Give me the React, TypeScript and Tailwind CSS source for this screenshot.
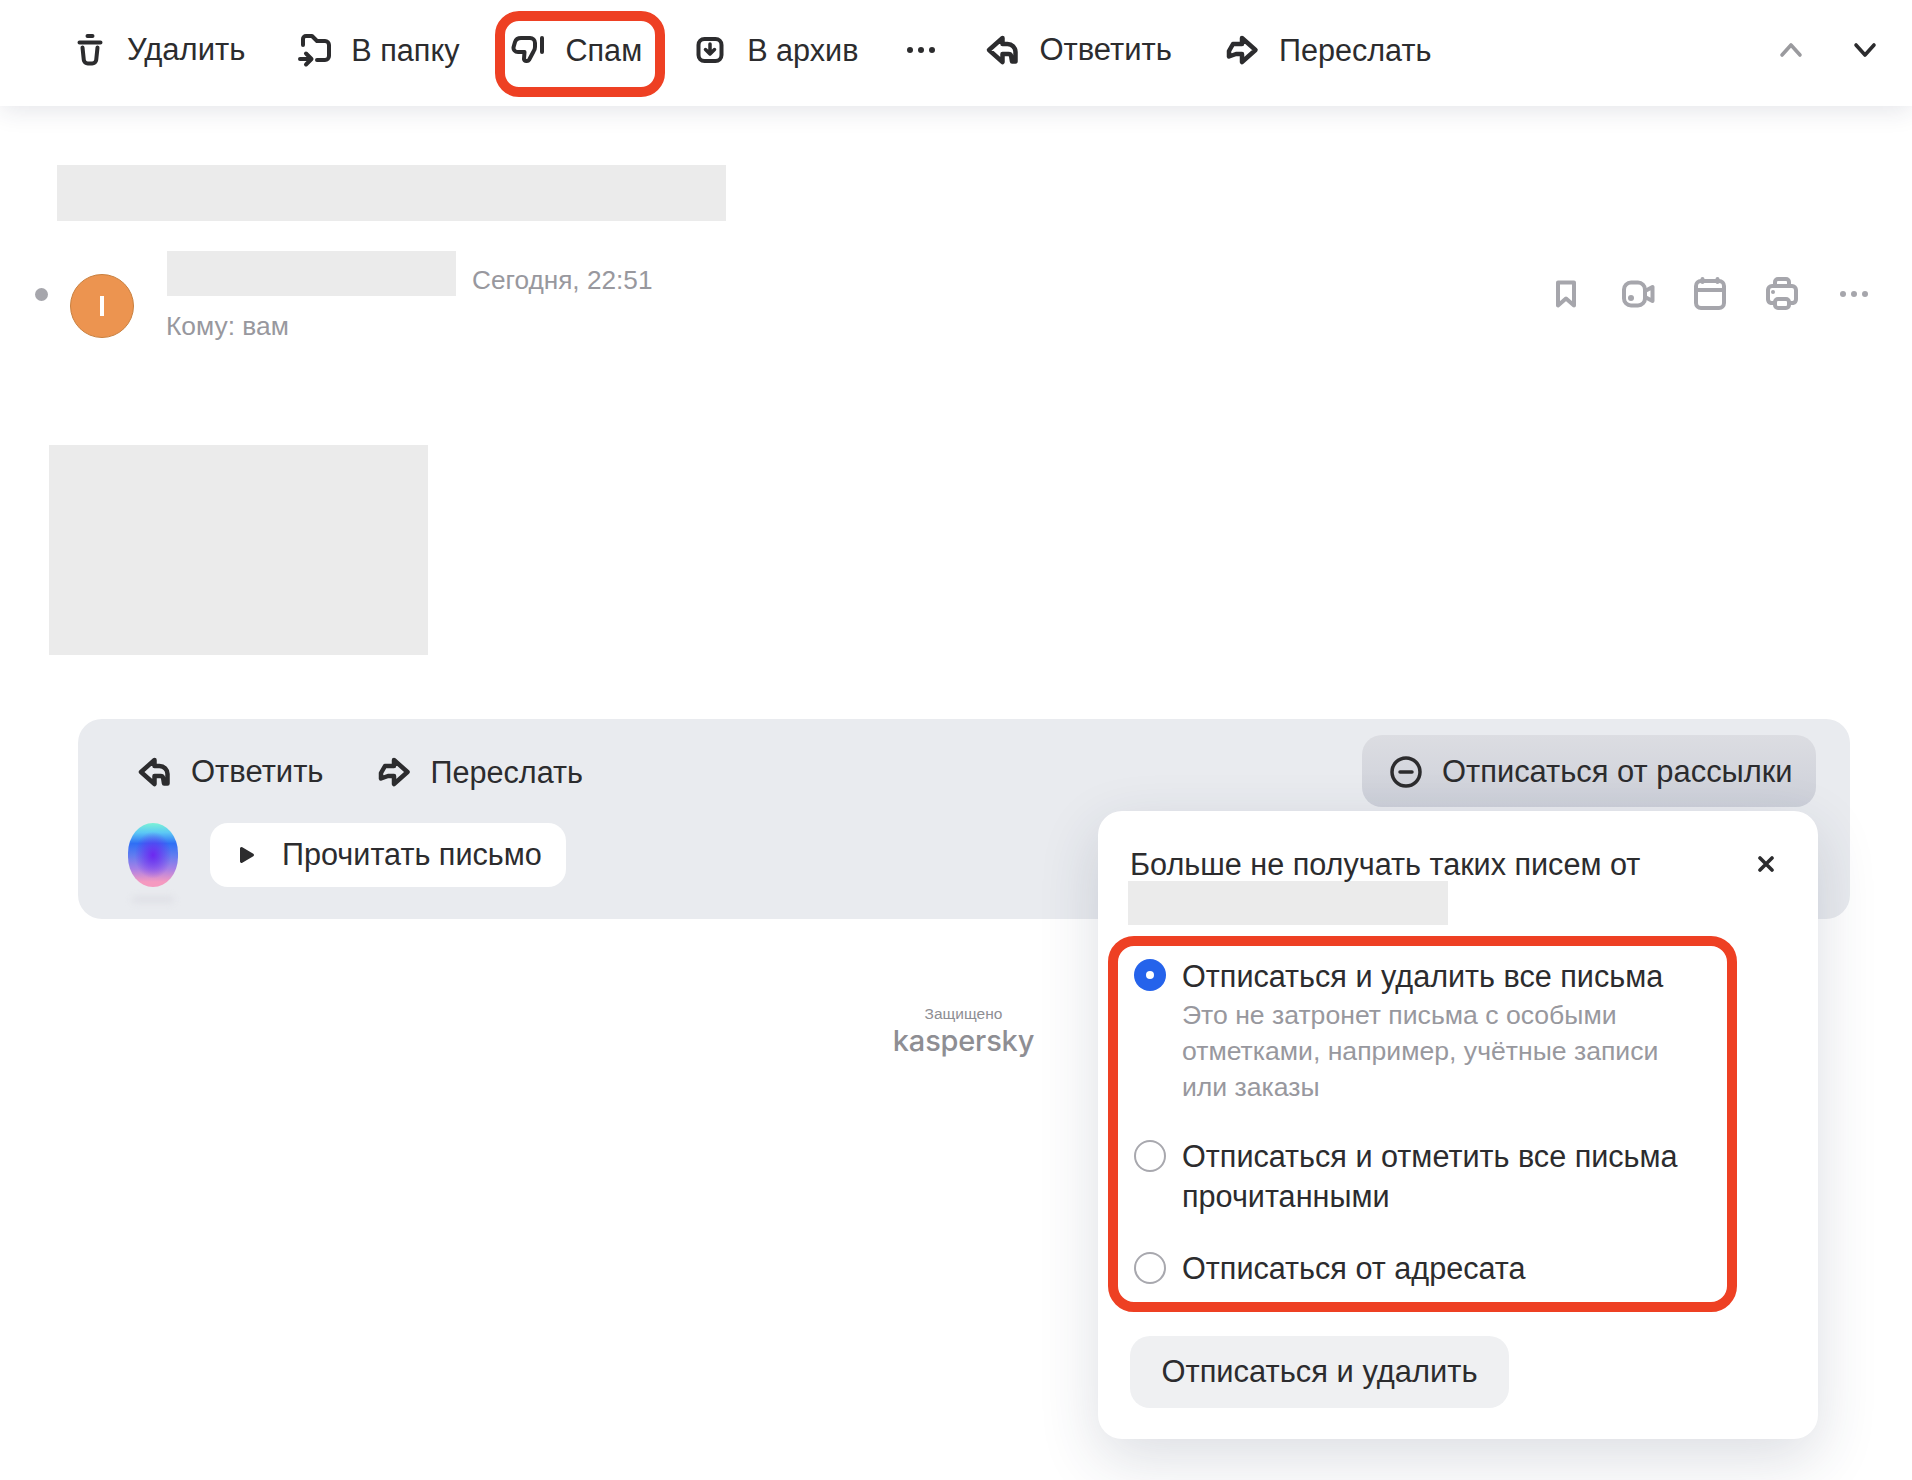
const ink = "#2c2c2e";

function TrashIcon() {
  return (
    <svg width="34" height="36" viewBox="0 0 34 36" fill="none" stroke={ink} strokeWidth="4" strokeLinecap="round" strokeLinejoin="round">
      <path d="M14.500 4h5M6.500 10.500h21M9.500 15.500l1.300 12.500a4 4 0 0 0 4 3.500h4.400a4 4 0 0 0 4-3.500l1.300-12.500" />
    </svg>
  );
}

function FolderIcon() {
  return (
    <svg width="34" height="36" viewBox="0 0 34 36" fill="none" stroke={ink} strokeWidth="4" strokeLinecap="round" strokeLinejoin="round">
      <path d="M6 13V7a3 3 0 0 1 3-3h6l5 5h8a4 4 0 0 1 4 4v11a4 4 0 0 1-4 4h-8" />
      <path d="M3 27h11M9 21.500l5.500 5.500L9 32.500" />
    </svg>
  );
}

function SpamIcon() {
  return (
    <svg width="34" height="36" viewBox="0 0 34 36" fill="none" stroke={ink} strokeWidth="4" strokeLinecap="round" strokeLinejoin="round">
      <path d="M10 6h9a5 5 0 0 1 5 5v4c0 1.500-.5 3-1.500 4.500L18 28c-.8 1.300-4.500 1.500-5-1l.5-7H7c-3 0-5-2.500-4.400-5l1.400-5c.8-2.500 3.500-4 6-4z" />
      <path d="M31 6v14" />
    </svg>
  );
}

function ArchiveIcon() {
  return (
    <svg width="34" height="36" viewBox="0 0 34 36" fill="none" stroke={ink} strokeWidth="4" strokeLinecap="round" strokeLinejoin="round">
      <rect x="5.500" y="7" width="23" height="22" rx="6" />
      <path d="M17 12v9M12.500 17.500 17 22l4.500-4.500" strokeWidth="3.500" />
    </svg>
  );
}

function ReplyIcon() {
  return (
    <svg width="34" height="36" viewBox="0 0 34 36" fill="none" stroke={ink} strokeWidth="4.500" strokeLinecap="round" strokeLinejoin="round">
      <path d="M17.500 6 4 18l13.500 12v-8h6c1.500 0 2.500 1 2.700 2.500l.8 5h3.500V20c0-4.500-3.500-8-8-8h-5z" />
    </svg>
  );
}

function ForwardIcon() {
  return (
    <svg width="34" height="36" viewBox="0 0 34 36" fill="none" stroke={ink} strokeWidth="4.500" strokeLinecap="round" strokeLinejoin="round">
      <path d="M17 6l13.500 12L17 30v-8h-6l-7 2.500V19l4-7h9z" />
    </svg>
  );
}

function Dots({ color = ink }: { color?: string }) {
  return (
    <svg width="30" height="8" viewBox="0 0 30 8" fill={color}>
      <circle cx="4" cy="4" r="3" />
      <circle cx="15" cy="4" r="3" />
      <circle cx="26" cy="4" r="3" />
    </svg>
  );
}

function Chevron({ up, color }: { up?: boolean; color: string }) {
  return (
    <svg width="24" height="16" viewBox="0 0 24 16" fill="none" stroke={color} strokeWidth="3.600" strokeLinecap="round" strokeLinejoin="round">
      <path d={up ? "M3 13 12 3l9 10" : "M3 3l9 10 9-10"} />
    </svg>
  );
}

function ToolItem({ icon, label, size = "text-[30.6px]" }: { icon: React.ReactNode; label: string; size?: string }) {
  return (
    <div className="flex items-center gap-5">
      <span className="flex w-[34px] justify-center">{icon}</span>
      <span className={`${size} leading-[36px]`}>{label}</span>
    </div>
  );
}

function MetaIcons() {
  const c = "#a6a6ac";
  return (
    <div className="flex items-center gap-[36px]">
      <svg width="36" height="36" viewBox="0 0 36 36" fill="none" stroke={c} strokeWidth="4" strokeLinejoin="round" strokeLinecap="round">
        <path d="M10 6.500h16v23l-8-7-8 7z" />
      </svg>
      <svg width="36" height="36" viewBox="0 0 36 36" fill="none" stroke={c} strokeWidth="4" strokeLinejoin="round" strokeLinecap="round">
        <rect x="4" y="6.500" width="21" height="23" rx="7" />
        <path d="M25 15l7.500-4v14l-7.500-4" />
        <circle cx="11" cy="22" r="3" fill={c} stroke="none" />
      </svg>
      <svg width="36" height="36" viewBox="0 0 36 36" fill="none" stroke={c} strokeWidth="4" strokeLinejoin="round" strokeLinecap="round">
        <rect x="4" y="5" width="28" height="27" rx="5" />
        <path d="M4 14h28M10.500 3v3M25.500 3v3" />
      </svg>
      <svg width="36" height="36" viewBox="0 0 36 36" fill="none" stroke={c} strokeWidth="4" strokeLinejoin="round" strokeLinecap="round">
        <path d="M11 10V6a3 3 0 0 1 3-3h8a3 3 0 0 1 3 3v4" />
        <path d="M10 27H7a4 4 0 0 1-3-4V14a4 4 0 0 1 4-4h20a4 4 0 0 1 4 4v9a4 4 0 0 1-3 4h-3" />
        <rect x="11" y="23" width="14" height="9" rx="3" />
        <circle cx="9" cy="16" r="2" fill={c} stroke="none" />
      </svg>
      <span className="flex w-[36px] justify-center"><Dots color={c} /></span>
    </div>
  );
}

function Radio({ on }: { on?: boolean }) {
  if (on) {
    return (
      <span className="mt-[3px] flex h-8 w-8 shrink-0 items-center justify-center rounded-full bg-[#2563eb]">
        <span className="h-2 w-2 rounded-full bg-white" />
      </span>
    );
  }
  return <span className="mt-[3px] h-8 w-8 shrink-0 rounded-full border-2 border-[#a8a8ae] bg-white" />;
}

export default function App() {
  return (
    <div className="relative h-[1480px] w-[1912px] overflow-hidden bg-white font-['Liberation_Sans',Arial,sans-serif] text-[#2c2c2e]">
      <div className="relative z-10 flex h-[106px] items-center gap-[53px] bg-white pb-[6px] pl-[73px] pr-[35px] shadow-[0_4px_24px_rgba(30,40,70,0.12)]">
        <ToolItem icon={<TrashIcon />} label="Удалить" size="text-[31px]" />
        <div className="-ml-px"><ToolItem icon={<FolderIcon />} label="В папку" /></div>
        <div className="relative -ml-px">
          <ToolItem icon={<SpamIcon />} label="Спам" />
          <div className="absolute -left-4 -right-[23px] -top-[21px] -bottom-[29px] rounded-[24px] border-[10px] border-[#ee4023]" />
        </div>
        <div className="-ml-[2px]"><ToolItem icon={<ArchiveIcon />} label="В архив" /></div>
        <span className="-ml-[7px] flex w-[34px] justify-center"><Dots /></span>
        <div className="-ml-[6px]"><ToolItem icon={<ReplyIcon />} label="Ответить" size="text-[31px]" /></div>
        <ToolItem icon={<ForwardIcon />} label="Переслать" />
        <div className="ml-auto flex items-center gap-[50px]">
          <Chevron up color="#9a9a9e" />
          <Chevron color={ink} />
        </div>
      </div>

      <div className="ml-[57px] mt-[59px] h-[56px] w-[669px] bg-[#ebebeb]" />

      <div className="mt-[30px] flex pl-[35px] pr-[40px]">
        <span className="mt-[37px] h-[13px] w-[13px] shrink-0 rounded-full bg-[#a6a6ac]" />
        <span className="ml-[22px] mt-[23px] flex h-16 w-16 shrink-0 items-center justify-center rounded-full border border-[#c9803f] bg-[#ec9450]">
          <span className="h-5 w-1 bg-white" />
        </span>
        <div className="ml-[33px]">
          <div className="flex">
            <div className="h-[45px] w-[289px] bg-[#ebebeb]" />
            <span className="ml-4 mt-[14px] text-[26.200px] leading-[30px] text-[#98989e]">Сегодня, 22:51</span>
          </div>
          <div className="-ml-px mt-[15px] text-[26.400px] leading-[30px] text-[#98989e]">Кому: вам</div>
        </div>
        <div className="ml-auto mt-[25px] h-9"><MetaIcons /></div>
      </div>

      <div className="ml-[49px] mt-[104px] h-[210px] w-[379px] bg-[#ebebeb]" />

      <div className="relative ml-[78px] mt-[64px] h-[200px] w-[1772px] rounded-[24px] bg-[#e9ebef] pl-[50px] pt-[35px]">
        <div className="flex items-center gap-[53px] pl-[9px]">
          <ToolItem icon={<ReplyIcon />} label="Ответить" size="text-[31px]" />
          <ToolItem icon={<ForwardIcon />} label="Переслать" />
        </div>
        <div className="mt-[33px] flex items-center">
          <div className="relative h-16 w-[50px]">
            <div className="absolute left-[4px] top-[73px] h-[7px] w-[42px] rounded-full bg-[#dfe0e6] blur-[3px]" />
            <div className="absolute inset-0 rounded-[25px/30px] bg-[radial-gradient(ellipse_at_50%_50%,#6d28f0_0%,#6d28f000_52%),linear-gradient(to_bottom,#7cf3d6_0%,#5cc8f5_15%,#2f6ff5_32%,#5f7cf0_50%,#a880e6_72%,#f59ac0_92%)]" />
          </div>
          <div className="ml-8 flex h-16 w-[356px] items-center rounded-[18px] bg-white pl-[29px]">
            <svg width="16" height="18" viewBox="0 0 16 18" fill={ink}><path d="M1 2.500v13a1.500 1.500 0 0 0 2.300 1.200l11-6.500a1.500 1.500 0 0 0 0-2.500l-11-6.500A1.500 1.500 0 0 0 1 2.500z" /></svg>
            <span className="ml-[27px] text-[30.600px]">Прочитать письмо</span>
          </div>
        </div>

        <div className="absolute right-[34px] top-4 flex h-[72px] w-[454px] items-center rounded-[20px] bg-gradient-to-b from-[#dcdde2] to-[#cdd0d9] pl-7 pt-[2px]">
          <svg width="32" height="32" viewBox="0 0 32 32" fill="none" stroke={ink} strokeWidth="3.500" strokeLinecap="round">
            <circle cx="16" cy="16" r="14" />
            <path d="M10 16h12" />
          </svg>
          <span className="ml-5 text-[30.900px]">Отписаться от рассылки</span>
        </div>

        <div className="absolute left-[1020px] top-[92px] z-20 h-[628px] w-[720px] rounded-[24px] bg-white pl-8 pt-[33px] shadow-[0_20px_60px_rgba(40,50,80,0.16)]">
          <div className="flex items-start">
            <span className="text-[30.600px] leading-[40px]">Больше не получать таких писем от</span>
            <svg className="ml-auto mr-[44px] mt-3" width="16" height="16" viewBox="0 0 16 16" fill="none" stroke={ink} strokeWidth="3.600" strokeLinecap="round">
              <path d="M2 2l12 12M14 2 2 14" />
            </svg>
          </div>
          <div className="-ml-[2px] mt-[-3px] h-11 w-[320px] bg-[#ebebeb]" />

          <div className="-ml-[22px] mt-[11px] h-[376px] w-[629px] rounded-[26px] border-[10px] border-[#ee4023] pl-4 pt-[10px]">
            <div className="flex gap-4">
              <Radio on />
              <div>
                <div className="text-[30.600px] leading-[40px]">Отписаться и удалить все письма</div>
                <div className="mt-[1px] w-[490px] text-[26.600px] leading-[36px] text-[#98989e]">
                  Это не затронет письма с особыми отметками, например, учётные записи или заказы
                </div>
              </div>
            </div>
            <div className="mt-[32px] flex gap-4">
              <Radio />
              <div className="-mt-px w-[510px] text-[30.600px] leading-[40px]">Отписаться и отметить все письма прочитанными</div>
            </div>
            <div className="mt-[33px] flex gap-4">
              <Radio />
              <div className="-mt-px text-[30.600px] leading-[40px]">Отписаться от адресата</div>
            </div>
          </div>

          <button className="mt-[24px] h-[72px] w-[379px] rounded-[20px] bg-[#eff0f2] text-[30.900px]">Отписаться и удалить</button>
        </div>
      </div>

      <div className="absolute left-[884px] top-[1005px] w-[159px] text-center text-[#8e8e93]">
        <div className="text-[15.500px] leading-[18px]">Защищено</div>
        <div className="mt-px font-['Inter',sans-serif] text-[29px] font-medium leading-[34px] tracking-[-0.2px]">kaspersky</div>
      </div>
    </div>
  );
}
